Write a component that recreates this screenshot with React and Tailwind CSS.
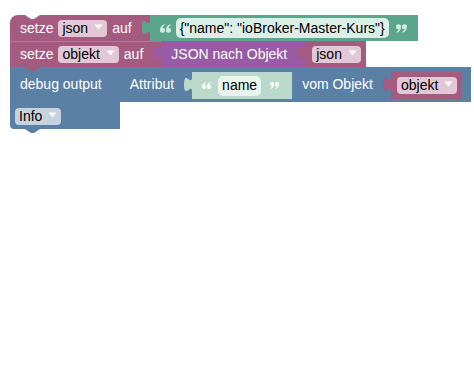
import React from "react";

function Tab({ fill }) {
  // puzzle tab of a value block, sticks out to the left
  return (
    <svg
      width="8"
      height="15"
      viewBox="0 0 8 15"
      className="absolute left-[-8px] top-[5px] overflow-visible"
    >
      <path d="M8,0 C8,10 0,-8 0,7.5 C0,23 8,5 8,15 Z" fill={fill} />
    </svg>
  );
}

function Caret() {
  return (
    <svg width="9" height="6" viewBox="0 0 9 6" className="ml-[6px] mb-[3px]">
      <path d="M0.5 0.5 H8.5 L4.5 5.5 Z" fill="#ffffff" opacity="0.9" />
    </svg>
  );
}

function VarField({ label, bg }) {
  return (
    <span
      className={`flex items-center h-[17px] pl-[4px] pr-[4px] rounded-[4px] text-black ${bg}`}
    >
      {label}
      <Caret />
    </span>
  );
}

const mark =
  "M0,5.6 C0,2.8 1.8,0.8 4,0.2 L4.3,1.1 C3,1.7 2.3,2.5 2.3,3.3 A2.3,2.3 0 1 1 0,5.6 Z";

function Quote({ open, fill, w = 11 }) {
  return (
    <svg
      width={w}
      height="9"
      viewBox="0 0 10 8"
      className={open ? "shrink-0" : "shrink-0 rotate-180"}
    >
      <path d={mark} fill={fill} />
      <path d={mark} fill={fill} transform="translate(5.4 0)" />
    </svg>
  );
}

export default function App() {
  return (
    <div
      className="w-[474px] h-[379px] bg-white pl-[10px] pt-[15px] text-[14px] text-white"
      style={{ fontFamily: '"Liberation Sans", Arial, sans-serif' }}
    >
      {/* setze json auf */}
      <div className="flex">
        <div className="relative flex items-center gap-[5px] h-[26px] pl-[10px] pr-[18px] bg-[#a55b80] rounded-tl-[8px]">
          <svg width="15" height="4" className="absolute top-0 left-[15px]">
            <polygon points="0,0 6,4 9,4 15,0" fill="#ffffff" />
          </svg>
          <span>setze</span>
          <VarField label="json" bg="bg-[#e2c8d5]" />
          <span>auf</span>
        </div>
        <div className="relative flex items-center h-[26px] pl-[10px] pr-[11px] bg-[#5ba58c]">
          <Tab fill="#5ba58c" />
          <Quote open fill="#d2ebe0" />
          <span className="ml-[5px] flex items-center h-[20px] px-[4px] rounded-[5px] bg-[#dcefe7] text-black">
            {'{"name": "ioBroker-Master-Kurs"}'}
          </span>
          <span className="ml-[7px] flex">
            <Quote fill="#d2ebe0" />
          </span>
        </div>
      </div>

      {/* setze objekt auf */}
      <div className="flex">
        <div className="relative flex items-center gap-[5px] h-[26px] pl-[10px] pr-[18px] bg-[#a55b80] shadow-[inset_0_1px_0_#b97596]">
          <svg width="15" height="4" className="absolute bottom-[-4px] left-[15px] z-10">
            <polygon points="0,0 6,4 9,4 15,0" fill="#a55b80" />
          </svg>
          <span>setze</span>
          <VarField label="objekt" bg="bg-[#e2c8d5]" />
          <span>auf</span>
        </div>
        <div className="relative flex items-center h-[26px] pl-[10px] pr-[18px] bg-[#995ba5]">
          <Tab fill="#995ba5" />
          <span>JSON nach Objekt</span>
        </div>
        <div className="relative flex items-center h-[26px] pl-[7px] pr-[5px] bg-[#a55b80]">
          <Tab fill="#a55b80" />
          <VarField label="json" bg="bg-[#e2c8d5]" />
        </div>
      </div>

      {/* debug output */}
      <div className="flex items-start">
        <div className="relative flex flex-col h-[62px] pr-[18px] bg-[#5b80a5] rounded-bl-[4px]">
          <svg width="15" height="4" className="absolute bottom-[-4px] left-[15px]">
            <polygon points="0,0 6,4 9,4 15,0" fill="#5b80a5" />
          </svg>
          <div className="flex items-center h-[35px] pl-[10px]">debug output</div>
          <div className="mt-[6px] ml-[5px] flex">
            <VarField label="Info" bg="bg-[#c6d2de]" />
          </div>
        </div>
        <div className="relative flex items-center h-[35px] pl-[10px] pr-[9px] bg-[#5b80a5]">
          <Tab fill="#5b80a5" />
          <span className="mr-[18px]">Attribut</span>
          <div className="relative flex items-center h-[27px] pl-[10px] pr-[13px] bg-[#bad9cb] mt-[2px]">
            <Tab fill="#bad9cb" />
            <Quote open fill="#ffffff" w={9} />
            <span className="ml-[7px] flex items-center h-[20px] px-[4px] rounded-[5px] bg-[#e9f4ef] text-black">
              name
            </span>
            <span className="ml-[9px] flex">
              <Quote fill="#ffffff" w={9} />
            </span>
          </div>
          <span className="ml-[10px] mr-[18px]">vom Objekt</span>
          <div className="relative flex items-center h-[27px] pl-[6px] pr-[5px] bg-[#a55b80] mt-[2px]">
            <Tab fill="#a55b80" />
            <VarField label="objekt" bg="bg-[#e2c8d5]" />
          </div>
        </div>
      </div>
    </div>
  );
}
